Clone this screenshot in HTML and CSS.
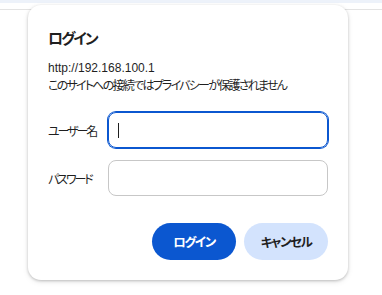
FILE: index.html
```html
<!DOCTYPE html>
<html lang="ja">
<head>
<meta charset="utf-8">
<link rel="stylesheet" href="styles.css">
</head>
<body>
<div class="topstrip"></div>
<div class="toolbar-line"></div>
<div class="dialog">
  <h1 class="title">ログイン</h1>
  <div class="origin">http://192.168.100.1</div>
  <div class="warning">このサイトへの接続ではプライバシーが保護されません</div>
  <div class="fields">
    <div class="row">
      <span class="label">ユーザー名</span>
      <div class="input focused"><span class="caret"></span></div>
    </div>
    <div class="row">
      <span class="label">パスワード</span>
      <div class="input"></div>
    </div>
  </div>
  <div class="actions">
    <button class="btn primary">ログイン</button>
    <button class="btn secondary">キャンセル</button>
  </div>
</div>
</body>
</html>
```
FILE: styles.css
```css
html, body {
  margin: 0;
  padding: 0;
  background: #ffffff;
  width: 382px;
  height: 295px;
  overflow: hidden;
  font-family: "Liberation Sans", "Noto Sans CJK JP", sans-serif;
  font-feature-settings: "palt";
  color: #1f1f1f;
}
.topstrip {
  height: 3px;
  background: #edf2fa;
}
.toolbar-line {
  margin-top: 6px;
  height: 1px;
  background: #e3e3e3;
}
.dialog {
  position: absolute;
  left: 28px;
  top: 5px;
  width: 320px;
  height: 275px;
  box-sizing: border-box;
  background: #ffffff;
  border-radius: 13px;
  box-shadow: 0 1px 3px rgba(0,0,0,0.22), 0 2px 6px rgba(0,0,0,0.08);
  padding: 24px 20px 20px 20px;
  display: flex;
  flex-direction: column;
}
.title {
  margin: 0;
  font-size: 15px;
  line-height: 20px;
  font-weight: 700;
  letter-spacing: -2px;
  color: #1f1f1f;
}
.origin {
  margin-top: 11px;
  font-size: 12px;
  line-height: 17px;
  color: #1f1f1f;
}
.warning {
  font-size: 12px;
  line-height: 18px;
  letter-spacing: -1.75px;
  white-space: nowrap;
  color: #1f1f1f;
}
.fields {
  margin-top: 17px;
  display: flex;
  flex-direction: column;
  gap: 12px;
}
.row {
  display: flex;
  align-items: center;
}
.label {
  width: 60px;
  flex: none;
  font-size: 12px;
  letter-spacing: -2.1px;
  color: #1f1f1f;
}
.input {
  flex: 1;
  height: 36px;
  box-sizing: border-box;
  border: 1px solid #c7c7c7;
  border-radius: 8px;
  display: flex;
  align-items: center;
  padding-left: 9px;
}
.input.focused {
  border-color: #0b57d0;
  box-shadow: 0 0 0 1px #0b57d0;
}
.caret {
  width: 1px;
  height: 15px;
  background: #1f1f1f;
}
.actions {
  margin-top: auto;
  display: flex;
  justify-content: flex-end;
  gap: 8px;
}
.btn {
  width: 84px;
  height: 37px;
  border: none;
  border-radius: 19px;
  font-family: "Liberation Sans", "Noto Sans CJK JP", sans-serif;
  font-feature-settings: "palt";
  font-size: 12.5px;
  font-weight: 700;
  letter-spacing: -1.4px;
  padding: 0;
}
.btn.primary {
  background: #0b57d0;
  color: #ffffff;
}
.btn.secondary {
  background: #d3e3fd;
  color: #1f1f1f;
}
```
